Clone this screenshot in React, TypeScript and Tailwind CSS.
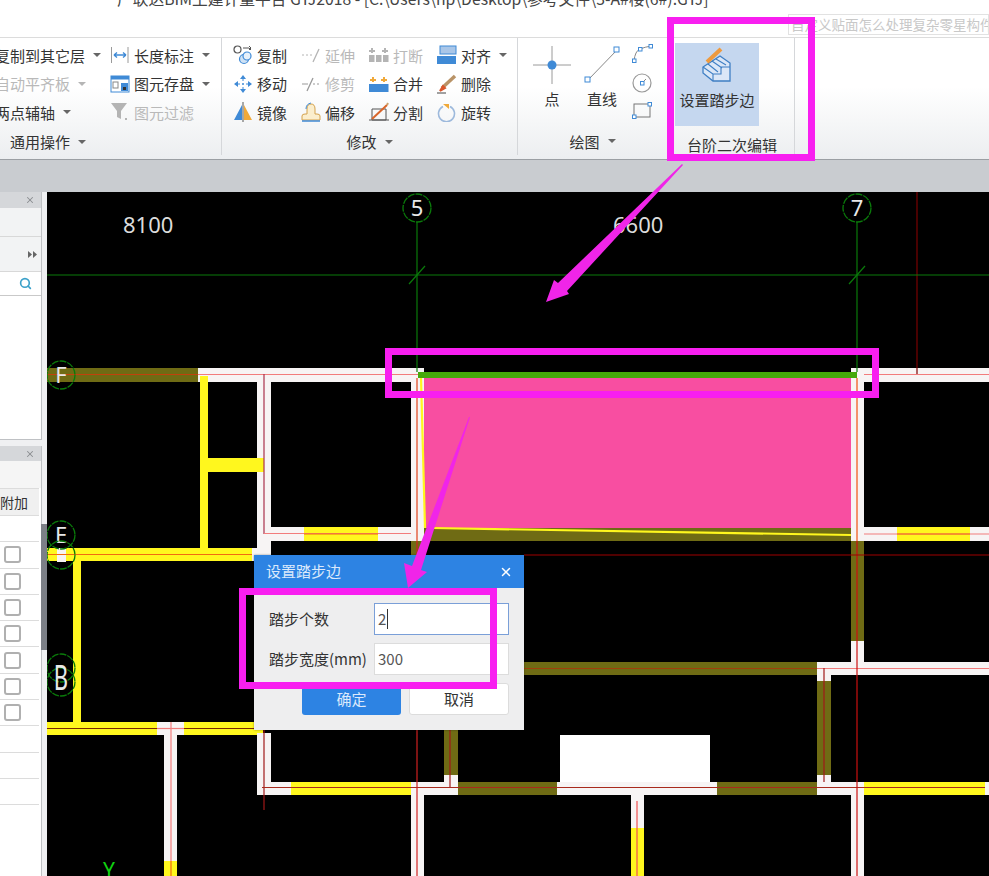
import { Search, X } from "lucide-react";

const FONT = "font-['Noto_Sans_CJK_SC','Noto_Sans',sans-serif]";

type RibbonItem = { label: string; icon: React.ReactNode; muted?: boolean; caret?: boolean };

function Caret({ muted }: { muted?: boolean }) {
  return (
    <span
      className={`inline-block h-0 w-0 border-x-[4px] border-t-[4px] border-x-transparent ${
        muted ? "border-t-[#b5b5b5]" : "border-t-[#666]"
      }`}
    />
  );
}

const dim = "#b4b4b4";
const blue = "#3f8ad6";

const generalCol1: RibbonItem[] = [
  { label: "复制到其它层", icon: null, caret: true },
  { label: "自动平齐板", icon: null, muted: true, caret: true },
  { label: "两点辅轴", icon: null, caret: true },
];

const generalCol2: RibbonItem[] = [
  {
    label: "长度标注",
    caret: true,
    icon: (
      <svg width="20" height="20" viewBox="0 0 20 20" fill="none">
        <path d="M1.5 2v16M18 2v16" stroke="#9a9a9a" />
        <path d="M4 10h12M4 10l3-2.5M4 10l3 2.5M16 10l-3-2.5M16 10l-3 2.5" stroke={blue} strokeWidth="1.4" />
      </svg>
    ),
  },
  {
    label: "图元存盘",
    caret: true,
    icon: (
      <svg width="20" height="20" viewBox="0 0 20 20" fill="none">
        <rect x="1" y="2" width="18" height="16" fill="#fff" stroke={blue} />
        <rect x="1" y="2" width="18" height="3.5" fill={blue} />
        <rect x="3" y="8" width="5" height="6" stroke="#888" />
        <rect x="11" y="9" width="7" height="8" fill={blue} />
        <rect x="13" y="13" width="3" height="3" fill="#333" />
      </svg>
    ),
  },
  {
    label: "图元过滤",
    muted: true,
    icon: (
      <svg width="20" height="20" viewBox="0 0 20 20">
        <path d="M1 1h16l-6 8v8l-4-2V9z" fill={dim} />
        <rect x="15" y="16" width="2" height="2" fill={dim} />
      </svg>
    ),
  },
];

const modifyCols: RibbonItem[][] = [
  [
    {
      label: "复制",
      icon: (
        <svg width="20" height="20" viewBox="0 0 20 20" fill="none">
          <circle cx="4.5" cy="4.5" r="3.5" stroke="#555" strokeWidth="1.2" />
          <circle cx="11" cy="14" r="4.5" fill="#cfe2f5" stroke={blue} strokeWidth="1.2" />
          <circle cx="14" cy="11" r="4" fill="#e6f0fa" stroke={blue} strokeWidth="1.2" />
          <path d="M10 3h6l2 2M16 1l2 2-2 2" stroke="#555" />
        </svg>
      ),
    },
    {
      label: "移动",
      icon: (
        <svg width="20" height="20" viewBox="0 0 20 20" fill={blue}>
          <path d="M10 1l3 4H7zM10 19l3-4H7zM1 10l4-3v6zM19 10l-4-3v6z" />
          <path d="M10 5v10M5 10h10" stroke={blue} strokeDasharray="2 2" />
        </svg>
      ),
    },
    {
      label: "镜像",
      icon: (
        <svg width="20" height="20" viewBox="0 0 20 20">
          <path d="M9 3v15H1z" fill={blue} />
          <path d="M11 3v15h8z" fill="#f0a93a" />
          <path d="M10 0v20" stroke="#555" />
        </svg>
      ),
    },
  ],
  [
    {
      label: "延伸",
      muted: true,
      icon: (
        <svg width="20" height="20" viewBox="0 0 20 20" fill="none" stroke={dim}>
          <path d="M1 10h10" strokeDasharray="2 2" />
          <path d="M12 17l6-13" strokeWidth="1.3" />
        </svg>
      ),
    },
    {
      label: "修剪",
      muted: true,
      icon: (
        <svg width="20" height="20" viewBox="0 0 20 20" fill="none" stroke="#999">
          <path d="M1 10h6" />
          <path d="M12 10h7" strokeDasharray="2 2" />
          <path d="M6 17l6-13" strokeWidth="1.3" />
        </svg>
      ),
    },
    {
      label: "偏移",
      icon: (
        <svg width="20" height="20" viewBox="0 0 20 20" fill="none">
          <path d="M1 18v-4q0-2 3-2h2V7q0-5 4-5t4 5v5h2q3 0 3 2v4z" fill="#fbeecd" stroke="#d4a24c" />
          <path d="M1 19h18" stroke={blue} strokeWidth="1.5" />
          <path d="M5 7q0-5 5-6" stroke={blue} />
        </svg>
      ),
    },
  ],
  [
    {
      label: "打断",
      muted: true,
      icon: (
        <svg width="20" height="20" viewBox="0 0 20 20" fill={dim}>
          <rect x="0" y="10" width="5.5" height="7" />
          <rect x="7" y="10" width="5.5" height="7" />
          <rect x="14" y="10" width="5.5" height="7" />
          <path d="M2 3h2v2h2v2H4v1H2V7H0V5h2zM15 3h2v2h2v2h-2v1h-2V7h-2V5h2z" />
        </svg>
      ),
    },
    {
      label: "合并",
      icon: (
        <svg width="20" height="20" viewBox="0 0 20 20">
          <rect x="0" y="10" width="19.5" height="8" fill={blue} />
          <path d="M3 3h2v2h2v2H5v1H3V7H1V5h2zM14 3h2v2h2v2h-2v1h-2V7h-2V5h2z" fill="#f0a93a" />
        </svg>
      ),
    },
    {
      label: "分割",
      icon: (
        <svg width="20" height="20" viewBox="0 0 20 20" fill="none">
          <path d="M3 7h14v11H3zM0 18h20" stroke="#555" />
          <path d="M3 17L18 3" stroke="#d9662b" strokeWidth="2" />
          <path d="M18 3l1-2" stroke="#caa06a" strokeWidth="2" />
        </svg>
      ),
    },
  ],
  [
    {
      label: "对齐",
      caret: true,
      icon: (
        <svg width="20" height="20" viewBox="0 0 20 20">
          <rect x="3" y="1" width="16" height="8" fill="#a9c6e8" stroke={blue} />
          <rect x="0" y="11" width="19" height="8" fill={blue} />
        </svg>
      ),
    },
    {
      label: "删除",
      icon: (
        <svg width="20" height="20" viewBox="0 0 20 20" fill="none">
          <path d="M5 14L18 2" stroke="#b99367" strokeWidth="3.5" />
          <path d="M3 17l3-5 2 2z" fill="#d9562b" stroke="#d9562b" strokeWidth="2" />
          <path d="M0 19h9" stroke="#444" />
        </svg>
      ),
    },
    {
      label: "旋转",
      icon: (
        <svg width="20" height="20" viewBox="0 0 20 20" fill="none">
          <path d="M6 4.5a8 8 0 1 0 7 0" stroke="#9db9dc" strokeWidth="1.6" />
          <path d="M6 2l6 0 0 5z" fill="#f0a93a" />
        </svg>
      ),
    },
  ],
];

function Row({ item }: { item: RibbonItem }) {
  return (
    <div className="flex h-[28.5px] items-center">
      {item.icon && <span className="mr-[4px] flex h-5 w-5 shrink-0 items-center justify-center">{item.icon}</span>}
      <span className={`whitespace-nowrap text-[15px] leading-none ${item.muted ? "text-[#b9b9b9]" : "text-[#333]"}`}>
        {item.label}
      </span>
      {item.caret && (
        <span className="ml-[8px] flex items-center">
          <Caret muted={item.muted} />
        </span>
      )}
    </div>
  );
}

function GroupLabel({ text }: { text: string }) {
  return (
    <div className="flex h-[30px] items-center justify-center gap-[8px] pt-[2px] text-[15px] leading-none text-[#333]">
      {text}
      <Caret />
    </div>
  );
}

function Ribbon() {
  return (
    <div className="flex h-[123px] overflow-hidden border-y border-t-[#dcdcdc] border-b-[#9b9fa3] bg-gradient-to-b from-white from-40% to-[#eceef0]">
      {/* 通用操作 */}
      <div className="flex h-[117px] w-[222px] shrink-0 flex-col justify-between border-r border-[#d5d7da] pt-[3px]">
        <div className="flex">
          <div className="ml-[-5px] w-[115px]">
            {generalCol1.map((item) => (
              <Row key={item.label} item={item} />
            ))}
          </div>
          <div>
            {generalCol2.map((item) => (
              <Row key={item.label} item={item} />
            ))}
          </div>
        </div>
        <div className="flex h-[30px] items-center gap-[8px] pl-[10px] pt-[2px] text-[15px] leading-none text-[#333]">
          通用操作
          <Caret />
        </div>
      </div>

      {/* 修改 */}
      <div className="flex h-[117px] w-[296px] shrink-0 flex-col justify-between border-r border-[#d5d7da] pt-[3px]">
        <div className="flex pl-[11px]">
          {modifyCols.map((col, i) => (
            <div key={i} className="w-[68px]">
              {col.map((item) => (
                <Row key={item.label} item={item} />
              ))}
            </div>
          ))}
        </div>
        <GroupLabel text="修改" />
      </div>

      {/* 绘图 */}
      <div className="flex h-[117px] w-[149px] shrink-0 flex-col justify-between pt-[6px]">
        <div className="flex">
          <div className="ml-[14px] flex w-[40px] flex-col items-center">
            <svg width="38" height="38" viewBox="0 0 38 38" className="mt-[2px]">
              <path d="M0 19h38M19 0v38" stroke="#9a9a9a" />
              <circle cx="19" cy="19" r="4.5" fill={blue} />
            </svg>
            <span className="mt-[5px] text-[15px] leading-[20px] text-[#333]">点</span>
          </div>
          <div className="ml-[12px] flex w-[36px] flex-col items-center">
            <svg width="36" height="38" viewBox="0 0 36 38" fill="none" className="mt-[2px]">
              <path d="M4 34L33 4" stroke="#888" />
              <rect x="1" y="31" width="5" height="5" fill="#fff" stroke={blue} />
              <rect x="30" y="1" width="5" height="5" fill="#fff" stroke={blue} />
            </svg>
            <span className="mt-[5px] text-[15px] leading-[20px] text-[#333]">直线</span>
          </div>
          <div className="ml-[12px] flex flex-col gap-[9px]">
            <svg width="22" height="20" viewBox="0 0 22 20" fill="none">
              <path d="M2 17Q3 7 8 5T19 2" stroke="#888" />
              <rect x="0.5" y="15" width="3.5" height="3.5" fill="#fff" stroke={blue} />
              <rect x="6.5" y="3.5" width="3.5" height="3.5" fill="#fff" stroke={blue} />
              <rect x="17" y="0.5" width="3.5" height="3.5" fill="#fff" stroke={blue} />
            </svg>
            <svg width="22" height="20" viewBox="0 0 22 20" fill="none">
              <circle cx="10" cy="10" r="9" stroke="#999" strokeWidth="1.2" />
              <path d="M10 10l4-4" stroke="#888" />
              <rect x="8.5" y="8.5" width="3.5" height="3.5" fill="#fff" stroke={blue} />
            </svg>
            <svg width="22" height="18" viewBox="0 0 22 18" fill="none">
              <rect x="2" y="2" width="16" height="13" stroke="#777" />
              <rect x="0.5" y="13" width="3.5" height="3.5" fill="#fff" stroke={blue} />
              <rect x="16" y="0.5" width="3.5" height="3.5" fill="#fff" stroke={blue} />
            </svg>
          </div>
        </div>
        <GroupLabel text="绘图" />
      </div>

      {/* 台阶二次编辑 */}
      <div className="flex h-[117px] w-[128px] shrink-0 flex-col border-r border-[#d5d7da]">
        <div className="ml-[8px] mt-[5px] flex h-[84px] w-[84px] flex-col items-center bg-[#c5d7ef]">
          <svg width="30" height="36" viewBox="0 0 30 36" fill="none" className="mt-[4px]">
            <path d="M1 20L18 9l10 7v18H11L1 26z" fill="#dbe7f7" stroke="#3f7fc4" strokeWidth="1.3" />
            <path d="M1 20l10 7v7M11 27h8v-7h9M6 17l10 8M10 14l10 7M14 12l10 6" stroke="#3f7fc4" strokeWidth="1.1" />
            <path d="M5 15L19 2" stroke="#ee9a3f" strokeWidth="4" />
          </svg>
          <span className="mt-[7px] whitespace-nowrap text-[15px] leading-[20px] text-[#333]">设置踏步边</span>
        </div>
        <div className="mt-[9px] pl-[20px] text-[15px] leading-[20px] text-[#333]">台阶二次编辑</div>
      </div>
    </div>
  );
}

function PanelClose() {
  return <X size={10} strokeWidth={2.5} className="text-[#8a8d91]" />;
}

function SidePanels() {
  const rows = Array.from({ length: 11 });
  return (
    <div className="relative flex h-[684px] w-[47px] shrink-0 flex-col bg-[#eff0f2]">
      {/* 上面板 */}
      <div className="h-[248px] w-[42px] shrink-0 border-b border-r border-[#bfc1c4] bg-white">
        <div className="flex h-[16px] items-center justify-end bg-[#d5d7da] pr-[6px]">
          <PanelClose />
        </div>
        <div className="h-[29px] border-b border-[#d8d8d8] bg-[#f2f3f4]" />
        <div className="flex h-[35px] items-center justify-end border-b border-[#d8d8d8] bg-[#f2f3f4] pr-[4px]">
          <svg width="9" height="7" viewBox="0 0 9 7" fill="#666">
            <path d="M0 0l4 3.5L0 7zM5 0l4 3.5L5 7z" />
          </svg>
        </div>
        <div className="flex h-[24px] items-center justify-end border-b border-[#c9c9c9] pr-[9px]">
          <Search size={13} strokeWidth={3} className="text-[#3aa0c9]" />
        </div>
      </div>

      {/* 下面板 */}
      <div className="mt-[6px] flex min-h-0 w-[42px] flex-1 flex-col overflow-hidden border-r border-[#bfc1c4] bg-white">
        <div className="flex h-[15px] shrink-0 items-center justify-end bg-[#d5d7da] pr-[6px]">
          <PanelClose />
        </div>
        <div className="h-[27px] shrink-0 bg-[#f5f5f5]" />
        <div className="flex h-[28px] w-[39px] shrink-0 items-center justify-end overflow-hidden whitespace-nowrap border-y border-[#dcdcdc] bg-[#f0f0f0] pr-[11px] text-[14px] leading-none text-[#333]">
          附加
        </div>
        {rows.map((_, i) => (
          <div key={i} className="flex h-[26.3px] w-[39px] shrink-0 items-center border-b border-[#dcdcdc] pl-[4px]">
            {i > 0 && i < 8 && <span className="h-[17px] w-[17px] rounded-[3px] border-2 border-[#b0b0b0] bg-white" />}
          </div>
        ))}
      </div>

      {/* 分隔条 */}
      <div className="absolute left-[41px] top-[332px] h-[126px] w-[6px] bg-[#7c8087]" />
    </div>
  );
}

const OLIVE = "#6f6b14";
const WHITE = "#f7f4f4";
const YELLOW = "#fff71e";
const PINKLINE = "#f27c7c";
const DARKRED = "#a01818";
const GREEN = "#0a7a0a";

function Axis({ x, y, label, stretch = 1 }: { x: number; y: number; label?: string; stretch?: number }) {
  return (
    <g>
      <circle cx={x} cy={y} r="14" fill="none" stroke={GREEN} strokeWidth="1.3" strokeDasharray="7 1" />
      {label && (
        <text
          transform={`translate(${x} ${y + 8}) scale(1 ${stretch})`}
          textAnchor="middle"
          fontSize="22"
          fill="#e8e8e8"
          fontFamily="'Noto Sans',sans-serif"
        >
          {label}
        </text>
      )}
    </g>
  );
}

// [x, y, w, h, fill]
const blocks: [number, number, number, number, string][] = [
  // F 轴
  [47, 368, 151, 14, OLIVE],
  [198, 368, 226, 14, WHITE],
  [851, 368, 138, 14, WHITE],
  [200, 376, 8, 172, YELLOW],
  [257, 382, 14, 173, WHITE],
  [208, 458, 56, 14, YELLOW],
  [264, 527, 147, 14, WHITE],
  [304, 527, 74, 14, YELLOW],
  [411, 368, 13, 173, WHITE],
  [851, 368, 13, 173, WHITE],
  [864, 527, 125, 14, WHITE],
  [897, 527, 73, 14, YELLOW],
  // 中部
  [411, 541, 13, 14, OLIVE],
  [851, 541, 13, 100, OLIVE],
  [47, 548, 205, 13, YELLOW],
  [252, 548, 5, 13, WHITE],
  [57, 548, 9, 14, WHITE],
  [73, 561, 8, 161, YELLOW],
  [47, 722, 110, 13, YELLOW],
  [157, 722, 27, 13, WHITE],
  [184, 722, 79, 13, YELLOW],
  [164, 735, 13, 126, WHITE],
  [164, 861, 13, 15, YELLOW],
  [257, 733, 14, 49, WHITE],
  // 下部
  [524, 662, 293, 13, OLIVE],
  [817, 662, 172, 13, WHITE],
  [851, 641, 13, 21, WHITE],
  [817, 675, 14, 6, WHITE],
  [817, 681, 14, 94, OLIVE],
  [817, 775, 14, 7, WHITE],
  [444, 730, 14, 45, OLIVE],
  [444, 775, 14, 7, WHITE],
  [560, 735, 150, 47, "#ffffff"],
  [257, 782, 34, 13, WHITE],
  [291, 782, 120, 13, YELLOW],
  [411, 782, 47, 13, WHITE],
  [458, 782, 99, 13, OLIVE],
  [557, 782, 160, 13, WHITE],
  [717, 782, 100, 13, OLIVE],
  [817, 782, 47, 13, WHITE],
  [864, 782, 121, 13, YELLOW],
  [985, 782, 4, 13, WHITE],
  [411, 795, 13, 81, WHITE],
  [631, 795, 13, 81, WHITE],
  [631, 828, 13, 48, YELLOW],
  [851, 795, 13, 81, WHITE],
];

// [x1, y1, x2, y2, stroke]
const lines: [number, number, number, number, string][] = [
  [47, 374.5, 198, 374.5, "#c2410c"],
  [198, 374.5, 418, 374.5, PINKLINE],
  [864, 374.5, 989, 374.5, PINKLINE],
  [264, 374, 264, 534, "#a8304a"],
  [264, 533.5, 411, 533.5, PINKLINE],
  [864, 534, 989, 534, PINKLINE],
  [897, 534, 970, 534, "#f26a10"],
  [304, 534, 378, 534, "#f26a10"],
  [47, 554.5, 252, 554.5, "#f26a10"],
  [47, 728.5, 157, 728.5, "#7a2a00"],
  [184, 728.5, 263, 728.5, "#7a2a00"],
  [157, 728.5, 184, 728.5, PINKLINE],
  [171, 722, 171, 861, PINKLINE],
  [171, 861, 171, 876, "#f26a10"],
  [264, 729, 264, 810, DARKRED],
  [262, 787.5, 985, 787.5, "#a82a1c"],
  [637, 801, 637, 876, "#f05050"],
  [817, 668.5, 989, 668.5, PINKLINE],
  [524, 668.5, 817, 668.5, "#a0400c"],
  [824, 668, 824, 782, DARKRED],
  [450, 730, 450, 787, DARKRED],
  [417, 378, 417, 541, "#e0401a"],
  [417, 541, 417, 876, "#d02020"],
  [857, 378, 857, 541, "#f05010"],
  [857, 541, 857, 876, "#cc1010"],
  [524, 555, 989, 555, "#a00000"],
  [917, 192, 917, 374, "#7a0000"],
  [47, 275, 989, 275, GREEN],
  [417, 222, 417, 372, GREEN],
  [857, 222, 857, 372, GREEN],
  [409, 284, 425, 266, GREEN],
  [849, 284, 865, 266, GREEN],
];

// 画布里的平面图，坐标直接用页面坐标
function Canvas() {
  return (
    <div className="h-[684px] min-w-0 flex-1 bg-black">
      <svg viewBox="47 192 942 684" className="block h-full w-full">
        {blocks.map(([x, y, w, h, fill], i) => (
          <rect key={i} x={x} y={y} width={w} height={h} fill={fill} />
        ))}
        <rect x="424" y="378" width="427" height="150" fill="#f84ea1" />
        <rect x="424" y="528" width="427" height="13" fill={OLIVE} />
        <path d="M432 528L851 535" stroke={YELLOW} strokeWidth="2.2" />
        <path d="M421 378L425 528" stroke={YELLOW} strokeWidth="2.2" />
        {lines.map(([x1, y1, x2, y2, stroke], i) => (
          <line key={i} x1={x1} y1={y1} x2={x2} y2={y2} stroke={stroke} strokeWidth="1.2" />
        ))}
        <rect x="418" y="372" width="439" height="6" fill="#45a80a" />
        <Axis x={417} y={208} label="5" />
        <Axis x={857} y={208} label="7" />
        <Axis x={61} y={375} label="F" />
        <Axis x={61} y={535} label="E" />
        <Axis x={61} y={555} />
        <Axis x={61} y={668} />
        <Axis x={61} y={682} label="B" stretch={1.6} />
        <g fontFamily="'Noto Sans',sans-serif" fontSize="22" fill="#dcdcdc">
          <text x="123" y="233">8100</text>
          <text x="613" y="233">6600</text>
        </g>
        <text x="109" y="878" textAnchor="middle" fontSize="21" fill="#10d010" fontFamily="'Noto Sans',sans-serif">
          Y
        </text>
      </svg>
    </div>
  );
}

function StepDialog() {
  return (
    <div className="absolute left-[254px] top-[555px] flex h-[175px] w-[270px] flex-col bg-[#eeeeef] shadow-[0_0_2px_rgba(0,0,0,0.4)]">
      <div className="flex h-[33px] items-center justify-between bg-[#2d83e3] pl-[12px] pr-[11px] text-[15px] text-[#dbe9fb]">
        设置踏步边
        <X size={14} strokeWidth={2.5} className="text-white" />
      </div>
      <div className="flex flex-col gap-[8px] px-[15px] pt-[15px] text-[15px] text-[#333]">
        <div className="flex items-center">
          <span className="w-[105px] shrink-0">踏步个数</span>
          <div className="flex h-[32px] flex-1 items-center border border-[#7a9fd8] bg-white pl-[3px] text-[#555]">
            2<span className="ml-[1px] h-[20px] w-px bg-[#333]" />
          </div>
        </div>
        <div className="flex items-center">
          <span className="w-[105px] shrink-0 whitespace-nowrap">踏步宽度(mm)</span>
          <div className="flex h-[32px] flex-1 items-center border border-[#dcdcdc] bg-white pl-[3px] text-[#555]">
            300
          </div>
        </div>
      </div>
      <div className="mt-[8px] flex justify-end gap-[8px] pr-[15px] text-[15px]">
        <button className="h-[32px] w-[99px] rounded-[3px] bg-[#2d83e3] text-[#dbe9fb]">确定</button>
        <button className="h-[32px] w-[100px] rounded-[3px] border border-[#dcdcdc] bg-white text-[#333]">取消</button>
      </div>
    </div>
  );
}

// 洋红色的标注：方框和箭头都压在截图内容上面
function Annotations() {
  return (
    <>
      <div className="absolute left-[667px] top-[17px] h-[144px] w-[148px] border-[7px] border-[#f81ff0]" />
      <div className="absolute left-[385px] top-[348px] h-[50px] w-[494px] border-[7px] border-[#f81ff0]" />
      <div className="absolute left-[239px] top-[588px] h-[101px] w-[258px] border-[7px] border-[#f81ff0]" />
      <svg viewBox="0 0 989 876" className="pointer-events-none absolute left-0 top-0 h-[876px] w-[989px]">
        <path d="M546 302L554 280 558 283 682 164 683 165 567 291 569 294z" fill="#f025e8" />
        <path d="M408 588L404 563 412 566 469 417 470 417 421 570 427 572z" fill="#f025e8" />
      </svg>
    </>
  );
}

export default function App() {
  return (
    <div className={`relative h-[876px] w-[989px] overflow-hidden bg-white ${FONT}`}>
      {/* 标题栏 */}
      <div className="relative h-[37px] overflow-hidden">
        <div className="mt-[-11px] whitespace-nowrap pl-[117px] text-[15.75px] leading-[20px] text-[#444]">
          广联达BIM土建计量平台 GTJ2018 - [C:\Users\hp\Desktop\参考文件\3-A#楼(6#).GTJ]
        </div>
        <div className="absolute left-[788px] top-[14px] h-[21px] w-[201px] overflow-hidden whitespace-nowrap border border-[#e2e2e2] pl-[2px] text-[13.5px] leading-[19px] text-[#c8c8c8]">
          自定义贴面怎么处理复杂零星构件
        </div>
      </div>

      <Ribbon />
      <div className="h-[32px] bg-[#c9ccd0]" />

      <div className="flex">
        <SidePanels />
        <Canvas />
      </div>

      <StepDialog />
      <Annotations />
    </div>
  );
}
